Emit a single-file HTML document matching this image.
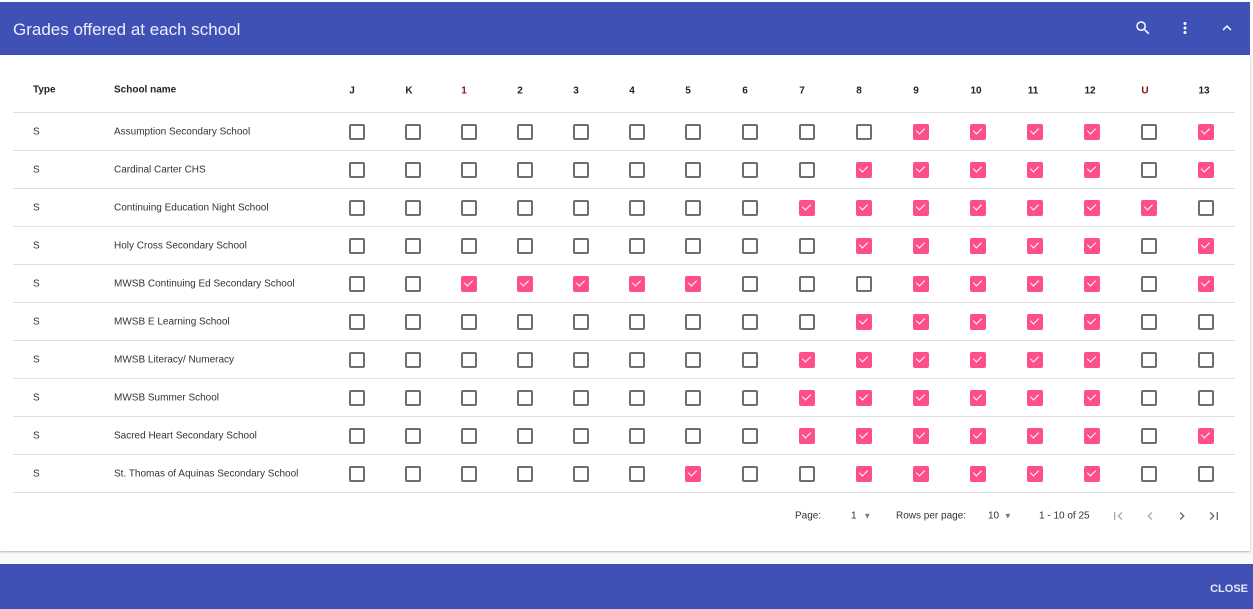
<!DOCTYPE html>
<html><head><meta charset="utf-8">
<style>
body{margin:0;width:1253px;height:609px;background:#fafafa;font-family:"Liberation Sans",Roboto,sans-serif;position:relative;overflow:hidden}
.top{position:absolute;left:0;top:2px;width:1250px;height:53px;background:#3f51b5}
.top .t{position:absolute;left:13px;top:18px;color:#eef;font-size:17px}
.card{position:absolute;left:0;top:55px;width:1250px;height:496px;background:#fff;box-shadow:0 1px 2px rgba(0,0,0,.3)}
.foot{position:absolute;left:0;top:564px;width:1253px;height:45px;background:#3f51b5}
.foot span{position:absolute;right:5px;top:19px;color:#e8e8f4;font-size:11px;font-weight:bold}
.tx{position:absolute;font-size:10px;color:#333;transform:translateY(-40%);white-space:nowrap}
.h{font-weight:bold;color:#222}
.hc{transform:translate(-50%,-40%)}
.line{position:absolute;left:13px;width:1222px;height:1px;background:#e0e0e0}
.cb{position:absolute;width:12px;height:12px;border:2px solid #6e6e6e;border-radius:2px}
.cb.on{background:#ff4f8b;border-color:#ff4f8b}
.cb.on:after{content:"";position:absolute;left:3px;top:0px;width:4px;height:7px;border:solid #fff;border-width:0 1.5px 1.5px 0;transform:rotate(45deg)}
.pg{position:absolute;top:516px;font-size:10px;color:#333;transform:translateY(-50%)}
</style></head><body>
<div class="top"><div class="t">Grades offered at each school</div>
<svg style="position:absolute;left:1134px;top:17px" width="18" height="18" viewBox="0 0 24 24"><path fill="#fff" d="M15.5 14h-.79l-.28-.27A6.47 6.47 0 0 0 16 9.5 6.5 6.5 0 1 0 9.5 16c1.61 0 3.09-.59 4.23-1.57l.27.28v.79l5 4.99L20.49 19l-4.99-5zm-6 0C7.01 14 5 11.990 5 9.5S7.01 5 9.5 5 14 7.01 14 9.5 11.99 14 9.5 14z"/></svg>
<svg style="position:absolute;left:1176px;top:17px" width="18" height="18" viewBox="0 0 24 24"><path fill="#fff" d="M12 8a2 2 0 1 0 0-4 2 2 0 0 0 0 4zm0 2a2 2 0 1 0 0 4 2 2 0 0 0 0-4zm0 6a2 2 0 1 0 0 4 2 2 0 0 0 0-4z"/></svg>
<svg style="position:absolute;left:1218px;top:17px" width="18" height="18" viewBox="0 0 24 24"><path fill="#fff" d="M7.41 15.41L12 10.83l4.59 4.58L18 14l-6-6-6 6z"/></svg>
</div>
<div class="card"></div>
<div id="tbl">
<div class="tx h" style="left:33px;top:89px">Type</div>
<div class="tx h" style="left:114px;top:89px">School name</div>
<div class="tx h hc" style="left:352px;top:90px">J</div>
<div class="tx h hc" style="left:409px;top:90px">K</div>
<div class="tx h hc" style="left:464px;top:90px;color:#8b1010">1</div>
<div class="tx h hc" style="left:520px;top:90px">2</div>
<div class="tx h hc" style="left:576px;top:90px">3</div>
<div class="tx h hc" style="left:632px;top:90px">4</div>
<div class="tx h hc" style="left:688px;top:90px">5</div>
<div class="tx h hc" style="left:745px;top:90px">6</div>
<div class="tx h hc" style="left:802px;top:90px">7</div>
<div class="tx h hc" style="left:859px;top:90px">8</div>
<div class="tx h hc" style="left:916px;top:90px">9</div>
<div class="tx h hc" style="left:976px;top:90px">10</div>
<div class="tx h hc" style="left:1033px;top:90px">11</div>
<div class="tx h hc" style="left:1090px;top:90px">12</div>
<div class="tx h hc" style="left:1145px;top:90px;color:#8b1010">U</div>
<div class="tx h hc" style="left:1204px;top:90px">13</div>
<div class="tx" style="left:33px;top:131px">S</div><div class="tx" style="left:114px;top:131px">Assumption Secondary School</div>
<div class="tx" style="left:33px;top:169px">S</div><div class="tx" style="left:114px;top:169px">Cardinal Carter CHS</div>
<div class="tx" style="left:33px;top:207px">S</div><div class="tx" style="left:114px;top:207px">Continuing Education Night School</div>
<div class="tx" style="left:33px;top:245px">S</div><div class="tx" style="left:114px;top:245px">Holy Cross Secondary School</div>
<div class="tx" style="left:33px;top:283px">S</div><div class="tx" style="left:114px;top:283px">MWSB Continuing Ed Secondary School</div>
<div class="tx" style="left:33px;top:321px">S</div><div class="tx" style="left:114px;top:321px">MWSB E Learning School</div>
<div class="tx" style="left:33px;top:359px">S</div><div class="tx" style="left:114px;top:359px">MWSB Literacy/ Numeracy</div>
<div class="tx" style="left:33px;top:397px">S</div><div class="tx" style="left:114px;top:397px">MWSB Summer School</div>
<div class="tx" style="left:33px;top:435px">S</div><div class="tx" style="left:114px;top:435px">Sacred Heart Secondary School</div>
<div class="tx" style="left:33px;top:473px">S</div><div class="tx" style="left:114px;top:473px">St. Thomas of Aquinas Secondary School</div>
</div>
<div class="pg" style="left:795px">Page:</div>
<div class="pg" style="left:851px">1 <span style="color:#777;font-size:8px;margin-left:4px">▼</span></div>
<div class="pg" style="left:896px">Rows per page:</div>
<div class="pg" style="left:988px">10 <span style="color:#777;font-size:8px;margin-left:2px">▼</span></div>
<div class="pg" style="left:1039px">1 - 10 of 25</div>
<svg style="position:absolute;left:1110px;top:508px" width="16" height="16" viewBox="0 0 24 24"><path fill="#aaa" d="M18.41 16.59L13.82 12l4.59-4.59L17 6l-6 6 6 6zM6 6h2v12H6z"/></svg>
<svg style="position:absolute;left:1142px;top:508px" width="16" height="16" viewBox="0 0 24 24"><path fill="#aaa" d="M15.41 7.41L14 6l-6 6 6 6 1.41-1.41L10.83 12z"/></svg>
<svg style="position:absolute;left:1174px;top:508px" width="16" height="16" viewBox="0 0 24 24"><path fill="#666" d="M10 6L8.59 7.41 13.17 12l-4.58 4.59L10 18l6-6z"/></svg>
<svg style="position:absolute;left:1206px;top:508px" width="16" height="16" viewBox="0 0 24 24"><path fill="#666" d="M5.59 7.41L10.18 12l-4.59 4.59L7 18l6-6-6-6zM16 6h2v12h-2z"/></svg>
<div class="foot"><span>CLOSE</span></div>
<script>
var cols=[357,413,469,525,581,637,693,750,807,864,921,978,1035,1092,1149,1206];
var on=[[10,11,12,13,15],[9,10,11,12,13,15],[8,9,10,11,12,13,14],[9,10,11,12,13,15],[2,3,4,5,6,10,11,12,13,15],[9,10,11,12,13],[8,9,10,11,12,13],[8,9,10,11,12,13],[8,9,10,11,12,13,15],[6,9,10,11,12,13]];
var h='';
for(var r=0;r<=10;r++){h+='<div class="line" style="top:'+(112+38*r)+'px"></div>';}
for(var r=0;r<10;r++){var y=132+38*r;for(var c=0;c<16;c++){h+='<div class="cb'+(on[r].indexOf(c)>=0?' on':'')+'" style="left:'+(cols[c]-8)+'px;top:'+(y-8)+'px"></div>';}}
document.getElementById('tbl').insertAdjacentHTML('beforeend',h);
</script>
</body></html>
